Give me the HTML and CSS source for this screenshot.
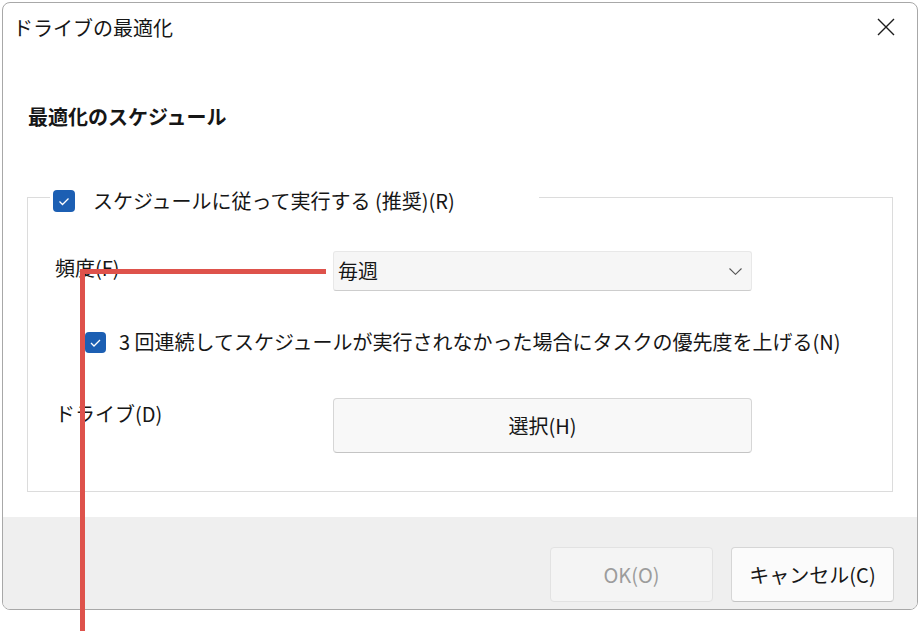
FILE: index.html
```html
<!DOCTYPE html>
<html lang="ja">
<head>
<meta charset="utf-8">
<title>ドライブの最適化</title>
<link rel="stylesheet" href="styles.css">
</head>
<body>
<div class="dialog">
  <div class="titlebar">
    <div class="title">ドライブの最適化</div>
    <svg class="close" width="18" height="18" viewBox="0 0 18 18"><path d="M1 1 L17 17 M17 1 L1 17" stroke="#1c1c1c" stroke-width="1.4" fill="none"/></svg>
  </div>
  <div class="main">
    <div class="heading">最適化のスケジュール</div>
    <div class="group">
      <div class="group-head">
        <svg class="check big" width="22" height="22" viewBox="0 0 22 22"><rect x="0" y="0" width="22" height="22" rx="4" fill="#1c5fb3"/><path d="M6.5 11.5 L9.5 14.5 L15.5 8.5" stroke="#fff" stroke-width="1.3" fill="none"/></svg>
        <span class="head-label">スケジュールに従って実行する (推奨)(R)</span>
      </div>
      <div class="row freq-row">
        <div class="label">頻度(F)</div>
        <div class="select">
          <span>毎週</span>
          <svg class="chev" width="13" height="7" viewBox="0 0 13 7"><path d="M0.5 0.5 L6.5 6.3 L12.5 0.5" stroke="#555" stroke-width="1.1" fill="none"/></svg>
        </div>
      </div>
      <div class="check-row">
        <svg class="check" width="21" height="21" viewBox="0 0 21 21"><rect x="0" y="0" width="21" height="21" rx="4" fill="#1c5fb3"/><path d="M6 11 L9 14 L15 8" stroke="#fff" stroke-width="1.3" fill="none"/></svg>
        <span>3 回連続してスケジュールが実行されなかった場合にタスクの優先度を上げる(N)</span>
      </div>
      <div class="row drive-row">
        <div class="label drive-label">ドライブ(D)</div>
        <div class="btn select-btn">選択(H)</div>
      </div>
    </div>
  </div>
  <div class="footer">
    <div class="btn foot-btn disabled">OK(O)</div>
    <div class="btn foot-btn">キャンセル(C)</div>
  </div>
</div>
<div class="annot"></div>
</body>
</html>
```

FILE: styles.css
```css
html, body {
  margin: 0;
  padding: 0;
  background: #ffffff;
}
body {
  font-family: "Noto Sans CJK JP", "Noto Sans", sans-serif;
  font-size: 20px;
  line-height: 28px;
  color: #161616;
  width: 921px;
  height: 631px;
  overflow: hidden;
  position: relative;
}
.dialog {
  box-sizing: border-box;
  margin: 2px 0 0 2px;
  width: 916px;
  height: 608px;
  border: 1px solid #a8a8a8;
  border-radius: 8px;
  overflow: hidden;
  display: flex;
  flex-direction: column;
  background: #fff;
}
.titlebar {
  box-sizing: border-box;
  display: flex;
  justify-content: space-between;
  align-items: flex-start;
  padding: 11px 22px 0 10px;
  height: 39px;
  flex: none;
}
.title {
  font-size: 20px;
  line-height: 28px;
}
.close {
  margin-top: 4px;
}
.main {
  flex: 1;
  padding: 0 24px;
}
.heading {
  margin: 61px 0 0 1px;
  font-weight: bold;
  line-height: 28px;
}
.group {
  box-sizing: border-box;
  margin-top: 66px;
  width: 866px;
  border: 1px solid #dcdcdc;
  padding: 0 0 38px 27px;
}
.group-head {
  display: flex;
  width: fit-content;
  align-items: center;
  gap: 18px;
  background: #fff;
  margin: -11px 0 0 -5px;
  padding: 0 84px 0 3px;
  height: 28px;
}
.check {
  flex: none;
  display: block;
}
.row {
  display: flex;
  align-items: flex-start;
}
.label {
  width: 278px;
  flex: none;
  line-height: 28px;
}
.freq-row {
  margin-top: 36px;
}
.freq-row .label {
  margin-top: 3px;
}
.select {
  box-sizing: border-box;
  width: 419px;
  height: 40px;
  background: #f6f6f6;
  border: 1px solid #e8e8e8;
  border-bottom-color: #cdcdcd;
  border-radius: 3px;
  display: flex;
  align-items: center;
  justify-content: space-between;
  padding: 0 9px 0 4px;
}
.chev {
  display: block;
  margin-top: 1px;
}
.check-row {
  margin: 37px 0 0 30px;
  display: flex;
  align-items: center;
  gap: 13px;
  height: 28px;
}
.drive-row {
  margin-top: 42px;
}
.drive-label {
  margin-top: 2px;
}
.btn {
  box-sizing: border-box;
  display: flex;
  align-items: center;
  justify-content: center;
  border: 1px solid #d6d6d6;
  border-bottom-color: #c4c4c4;
  border-radius: 4px;
  background: #f8f8f8;
}
.select-btn {
  width: 419px;
  height: 55px;
}
.footer {
  flex: none;
  height: 92px;
  background: #efefef;
  box-sizing: border-box;
  padding: 30px 23px 0 0;
  display: flex;
  justify-content: flex-end;
  align-items: flex-start;
  gap: 18px;
}
.foot-btn {
  width: 163px;
  height: 55px;
  background: #fbfbfb;
}
.foot-btn.disabled {
  background: #f4f4f4;
  border-color: #e2e2e2;
  color: #9c9c9c;
}
.annot {
  position: absolute;
  left: 80px;
  top: 269px;
  width: 246px;
  height: 362px;
  box-sizing: border-box;
  border-top: 5px solid #de524b;
  border-left: 5px solid #de524b;
}
```
